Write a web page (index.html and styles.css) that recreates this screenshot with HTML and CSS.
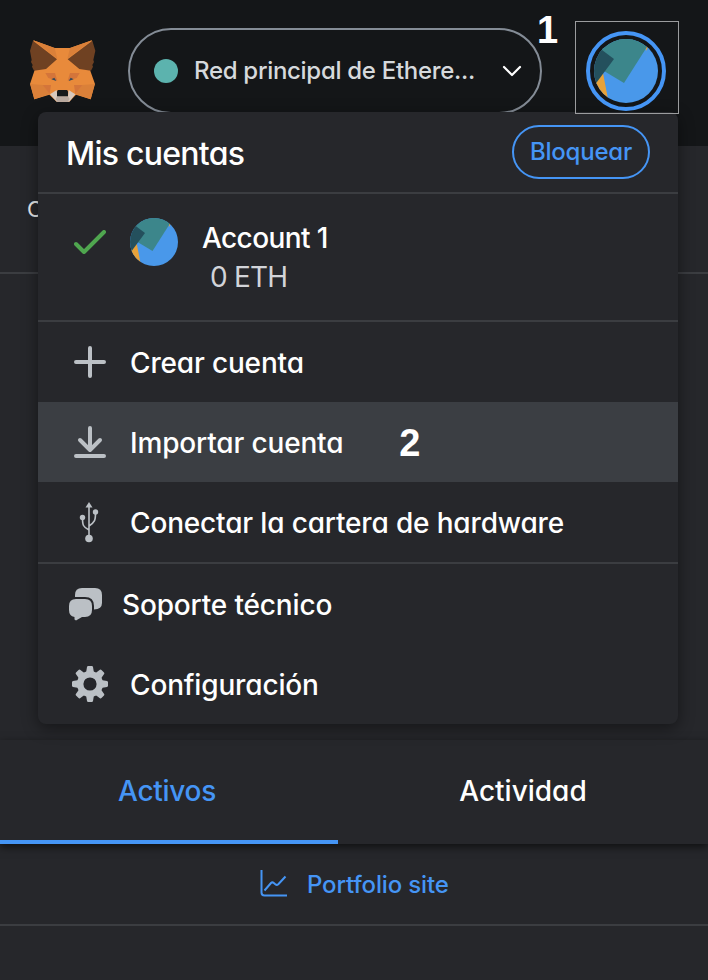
FILE: index.html
```html
<!DOCTYPE html>
<html lang="es">
<head>
<meta charset="utf-8">
<title>Mis cuentas</title>
<link rel="stylesheet" href="styles.css">
</head>
<body>
<svg class="defs" width="0" height="0">
  <defs>
    <clipPath id="round"><circle cx="32" cy="32" r="32"/></clipPath>
    <symbol id="avatar" viewBox="0 0 64 64">
      <g clip-path="url(#round)">
        <path fill="#4998ea" d="M0 0h64v64H0z"/>
        <path fill="#e8a23a" d="M0 44 9 34l5 26H0zM51 7l3 1-2 4z"/>
        <path fill="#3c868b" d="M0 0h58L30 44 10 32z"/>
        <path fill="#24505d" d="M8 11 20 20 0 47V11z"/>
      </g>
    </symbol>
    <path id="teeth" d="M-4-11-3-17q.2-1 1.200-1h3.600q1 0 1.200 1l1 6zM-4 11-3 17q.2 1 1.200 1h3.600q1 0 1.200-1l1-6zM11-4 17-3q1 .2 1 1.200v3.600q0 1-1 1.200l-6 1zM-11-4-17-3q-1 .2-1 1.200v3.600q0 1 1 1.200l6 1z"/>
  </defs>
</svg>
<div class="app">
  <header class="topbar">
    <svg class="fox" viewBox="0 0 270 240">
      <path fill="#e88a3b" d="M40 31 104 54h46l66-23-6 89 15 42-13 46-44-14-20 21h-38l-22-21-45 14-13-46 14-42z"/>
      <path fill="#da8039" d="M40 31 104 54 112 86zM216 31 150 54 142 86zM31 162l38 3 20 27-46 16zM224 162l-38 3-20 27 46 16z"/>
      <path fill="#6f4122" d="M39 32 111 88 78 117 42 122 36 110 38 105 33 96 35 90 30 62zM217 32 143 88 178 117 213 122 219 110 217 105 222 96 220 90 226 62z"/>
      <path fill="#d4753a" d="M76 129h29l7 23-27-8zM179 129h-29l-7 23 27-8zM68 165h25l-4 27zM187 165h-25l4 27z"/>
      <path fill="#34495a" d="m94 148 9-5 6 10zM161 148l-9-5-6 10z"/>
      <path fill="#d8c9bd" d="m90 193 20-13 2 19h32l2-19 20 13-18 22h-38z"/>
      <path fill="#b9aaa0" d="m107 207 5-8h32l5 8-6 8h-31z"/>
      <path fill="#15191b" d="m114 180h27l3 4v15h-33v-15z"/>
    </svg>
    <div class="network">
      <span class="dot"></span>
      <span class="network-name">Red principal de Ethere...</span>
      <svg class="chevron" viewBox="0 0 20 12"><path d="m2 2 8 8 8-8"/></svg>
    </div>
    <span class="step step-one">1</span>
    <div class="focus-frame">
      <div class="ring"><svg class="avatar-lg"><use href="#avatar"/></svg></div>
    </div>
  </header>
  <div class="site-row">C</div>
  <main class="balance"></main>
  <nav class="tabs">
    <div class="tab active"><span>Activos</span></div>
    <div class="tab"><span>Actividad</span></div>
  </nav>
  <div class="portfolio">
    <svg class="chart" viewBox="0 0 28 28"><path d="M1.500 0v22.500q0 3 3 3H27"/><path d="m4.500 20.500 6.500-7.500q1.300-1.300 2.800 0l1.500 1.300q1.500 1.200 3 0L25.500 6.500"/></svg>
    <span>Portfolio site</span>
  </div>

  <section class="menu">
    <div class="menu-head">
      <h1>Mis cuentas</h1>
      <button class="lock">Bloquear</button>
    </div>
    <div class="account">
      <svg class="check" viewBox="0 0 32 24"><path d="m2 14 8 8L30 2"/></svg>
      <svg class="avatar-sm"><use href="#avatar"/></svg>
      <div class="account-text">
        <div class="account-name">Account 1</div>
        <div class="eth">0 ETH</div>
      </div>
    </div>
    <div class="group">
      <div class="item">
        <span class="icon"><svg width="32" height="32" viewBox="0 0 32 32"><path class="line" d="M16 2v28M2 16h28"/></svg></span>
        <span class="label">Crear cuenta</span>
      </div>
      <div class="item hover">
        <span class="icon"><svg width="32" height="32" viewBox="0 0 32 32"><path class="line" d="M16 2v20M6 14l10 10 10-10M2 30h28"/></svg></span>
        <span class="label">Importar cuenta</span>
        <span class="step step-two">2</span>
      </div>
      <div class="item">
        <span class="icon usb"><svg width="20" height="42" viewBox="0 0 20 42"><path class="fill" d="M10 1 13.500 6.500h-7z"/><path class="thin" d="M10 4v32M10 29C4 26 3.500 24 3.500 17M10 25C16 21 16.500 19 16.500 12"/><circle class="fill" cx="10" cy="37.500" r="3.800"/><circle class="fill" cx="3.500" cy="16.500" r="2.700"/><circle class="fill" cx="16.500" cy="11" r="2.700"/></svg></span>
        <span class="label">Conectar la cartera de hardware</span>
      </div>
    </div>
    <div class="group last">
      <div class="item support">
        <span class="icon"><svg width="33" height="33" viewBox="0 0 33 33"><path class="fill" d="M6 9V7q0-7 7-7h13q7 0 7 7v8q0 6-8 6.500V18q0-9-9-9z"/><path class="fill" d="M7 11h9q7 0 7 7v4q0 7-7 7h-3l-6 3.500-1.500-1V29Q0 28 0 22v-4q0-7 7-7z"/></svg></span>
        <span class="label">Soporte técnico</span>
      </div>
      <div class="item">
        <span class="icon"><svg width="36" height="36" viewBox="-18 -18 36 36">
          <circle class="gear-ring" r="9.800"/>
          <use class="fill" href="#teeth"/>
          <use class="fill" href="#teeth" transform="rotate(45)"/>
        </svg></span>
        <span class="label">Configuración</span>
      </div>
    </div>
  </section>
</div>
</body>
</html>
```
FILE: styles.css
```css
* { box-sizing: border-box; }
body { margin: 0; background: #24272a; }
svg { display: block; flex: none; }
.defs { position: absolute; }
.app {
  position: relative;
  width: 708px;
  height: 980px;
  overflow: hidden;
  display: flex;
  flex-direction: column;
  background: #26272b;
  color: #fff;
  font-family: Inter, Lato, sans-serif;
  font-feature-settings: "cv11", "ss03";
  font-size: 28px;
  font-weight: 500;
  letter-spacing: -0.16px;
  line-height: 40px;
  white-space: nowrap;
}
.topbar {
  flex: none;
  height: 146px;
  padding: 21px 29px 0 20px;
  display: flex;
  align-items: flex-start;
  background: #141618;
}
.fox { width: 90px; height: 80px; margin-top: 9px; }
.network {
  width: 414px;
  height: 86px;
  margin: 7px 0 0 18px;
  padding: 0 18px 0 24px;
  display: flex;
  align-items: center;
  border: 2px solid #848c96;
  border-radius: 43px;
}
.dot { width: 24px; height: 24px; border-radius: 50%; background: #5cb3ae; margin-right: 16px; }
.network-name { font-size: 24px; letter-spacing: -0.3px; color: #d6d9dc; }
.chevron { width: 20px; height: 12px; margin-left: auto; }
.chevron path { fill: none; stroke: #fff; stroke-width: 2.2; stroke-linecap: round; stroke-linejoin: round; }
.step { font-family: "Liberation Sans", Arial, sans-serif; font-weight: 700; font-size: 38px; letter-spacing: 0; }
.step-one { width: 33px; margin-top: -11px; text-indent: -5px; }
.focus-frame {
  width: 104px;
  height: 93px;
  border: 1px solid #9b9c9e;
  padding: 9px 0 0 10px;
  position: relative;
  z-index: 3;
}
.ring { width: 80px; height: 80px; border: 4px solid #4595f5; border-radius: 50%; padding: 4px; }
.avatar-lg { width: 64px; height: 64px; }
.site-row { flex: none; height: 128px; padding: 43px 27px; border-bottom: 2px solid #3b3d41; font-size: 22px; font-weight: 400; color: #e7e8e9; }
.balance { flex: 1; }
.tabs { flex: none; height: 104px; display: flex; box-shadow: 0 3px 8px rgba(0,0,0,.6); }
.tab { flex: 1; display: flex; align-items: center; justify-content: center; letter-spacing: 0; }
.tab.active { flex: none; width: 338px; border-bottom: 4px solid #4595f5; color: #4595f5; padding: 2px 4px 0 0; letter-spacing: -0.3px; }
.tab:last-child { padding-bottom: 2px; }
.portfolio {
  flex: none;
  height: 82px;
  margin-bottom: 54px;
  padding-left: 260px;
  display: flex;
  align-items: center;
  gap: 19px;
  border-bottom: 2px solid #3b3d41;
  color: #4595f5;
  font-size: 24px;
}
.portfolio span { padding-top: 1px; }
.chart { width: 28px; height: 28px; }
.chart path { fill: none; stroke: #4595f5; stroke-width: 2; }
.menu {
  position: absolute;
  left: 38px;
  top: 112px;
  width: 640px;
  height: 612px;
  border-radius: 8px;
  background: #26272b;
  box-shadow: 0 4px 16px rgba(0,0,0,.45);
  z-index: 2;
}
.menu-head {
  height: 82px;
  padding: 0 28px;
  display: flex;
  align-items: center;
  justify-content: space-between;
  border-bottom: 2px solid #3b3d41;
}
h1 { margin: 0; padding-top: 3px; font-size: 32px; font-weight: 500; letter-spacing: -0.75px; }
.lock {
  width: 138px;
  height: 54px;
  padding: 0;
  border: 2px solid #4595f5;
  border-radius: 27px;
  background: none;
  color: #4595f5;
  font: inherit;
  font-size: 24px;
  letter-spacing: -0.2px;
}
.account { height: 128px; padding: 24px 36px; display: flex; border-bottom: 2px solid #3b3d41; }
.check { width: 32px; height: 24px; margin-top: 12px; }
.check path { fill: none; stroke: #4fa64f; stroke-width: 4; stroke-linecap: round; stroke-linejoin: round; }
.avatar-sm { width: 48px; height: 48px; margin: 0 24px; }
.account-text { line-height: 39px; padding-top: 1px; }
.account-name { letter-spacing: -0.6px; }
.eth { padding-left: 8px; color: #d2d4d9; font-weight: 400; letter-spacing: -0.8px; }
.group { border-bottom: 2px solid #3b3d41; }
.group.last { border: 0; }
.item { height: 80px; padding-left: 32px; display: flex; align-items: center; }
.label { padding-top: 1px; }
.icon { width: 40px; margin-right: 20px; display: flex; justify-content: center; }
.usb { padding-right: 2px; }
.support { padding-left: 31px; }
.support .icon { width: 33px; }
.hover { background: #3b3e43; }
.step-two { margin-left: 56px; padding-top: 2px; }
.line { fill: none; stroke: #bbc0c5; stroke-width: 4; stroke-linecap: round; stroke-linejoin: round; }
.thin { fill: none; stroke: #bbc0c5; stroke-width: 1.6; }
.fill { fill: #bbc0c5; }
.gear-ring { fill: none; stroke: #bbc0c5; stroke-width: 6.4; }
```
